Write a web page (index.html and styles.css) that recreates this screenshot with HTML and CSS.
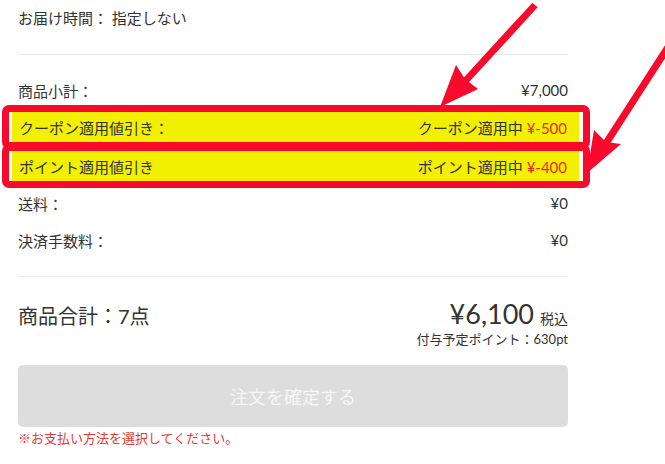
FILE: index.html
```html
<!DOCTYPE html>
<html lang="ja">
<head>
  <meta charset="UTF-8">
  <meta name="viewport" content="width=device-width, initial-scale=1.0">
  <title>注文内容の確認</title>
  <link rel="stylesheet" href="styles.css">
</head>
<body>
  <div class="summary">
    <div class="delivery">お届け時間： 指定しない</div>

    <div class="prices">
      <div class="row subtotal">
        <span>商品小計：</span>
        <span>¥7,000</span>
      </div>

      <div class="mark">
        <div class="row">
          <span>クーポン適用値引き：</span>
          <span>クーポン適用中 <em class="minus">¥-500</em></span>
        </div>
      </div>
      <div class="mark next">
        <div class="row">
          <span>ポイント適用値引き</span>
          <span>ポイント適用中 <em class="minus">¥-400</em></span>
        </div>
      </div>

      <div class="row shipping">
        <span>送料：</span>
        <span>¥0</span>
      </div>
      <div class="row fee">
        <span>決済手数料：</span>
        <span>¥0</span>
      </div>
    </div>

    <div class="total">
      <div class="total-line">
        <span class="total-label">商品合計：7点</span>
        <span class="total-price">¥6,100<small>税込</small></span>
      </div>
      <div class="points">付与予定ポイント：630pt</div>
    </div>

    <button class="confirm" disabled>注文を確定する</button>
    <p class="error">※お支払い方法を選択してください。</p>
  </div>

  <!-- annotation arrows -->
  <svg class="arrows" width="665" height="464" viewBox="0 0 665 464">
    <line x1="535" y1="5" x2="458" y2="89" />
    <polygon points="440,107 456,65 465,79 478,89" />
    <line x1="670" y1="44" x2="603" y2="148" />
    <polygon points="587,173 594,130 606,142 621,144" />
  </svg>
</body>
</html>
```

FILE: styles.css
```css
body {
  margin: 0;
  position: relative;
  font-family: Lato, "Noto Sans CJK JP", sans-serif;
  color: #333;
  background: #fff;
}
.summary {
  width: 550px;
  padding: 0 18px;
  font-size: 15px;
}
.delivery {
  padding: 8px 0 26px;
  line-height: 20px;
  border-bottom: 1px solid #e8e8e8;
}
.prices {
  padding: 25px 0 26px;
  border-bottom: 1px solid #e8e8e8;
}
.row {
  display: flex;
  justify-content: space-between;
  align-items: center;
  height: 20px;
}
.mark {
  margin: 5px -22px 0 -16px;
  padding: 0 4px 0 3px;
  border: 7px solid #f80a2c;
  border-radius: 7px;
  background: #fff;
}
.mark.next {
  margin-top: -5px;
}
.mark .row {
  height: 30px;
  padding: 0 12px 0 7px;
  background: #f2f000;
}
.minus {
  font-style: normal;
  color: #e8281a;
}
.shipping {
  margin-top: 5px;
}
.fee {
  margin-top: 17px;
}
.total {
  padding-top: 20px;
}
.total-line {
  display: flex;
  justify-content: space-between;
  align-items: baseline;
}
.total-label {
  font-size: 20px;
}
.total-price {
  font-size: 27px;
}
.total-price small {
  margin-left: 6px;
  font-size: 14px;
}
.points {
  text-align: right;
  font-size: 13px;
  margin-top: -1px;
}
.confirm {
  display: block;
  width: 100%;
  height: 62px;
  margin-top: 17px;
  border: none;
  border-radius: 5px;
  background: #dddddd;
  color: #f6f6f6;
  font-family: inherit;
  font-size: 18px;
}
.error {
  margin: 1px 0 0;
  font-size: 13px;
  color: #e53935;
}
.arrows {
  position: absolute;
  top: 0;
  left: 0;
  pointer-events: none;
}
.arrows line {
  stroke: #f80a2c;
  stroke-width: 7;
}
.arrows polygon {
  fill: #f80a2c;
}
```
